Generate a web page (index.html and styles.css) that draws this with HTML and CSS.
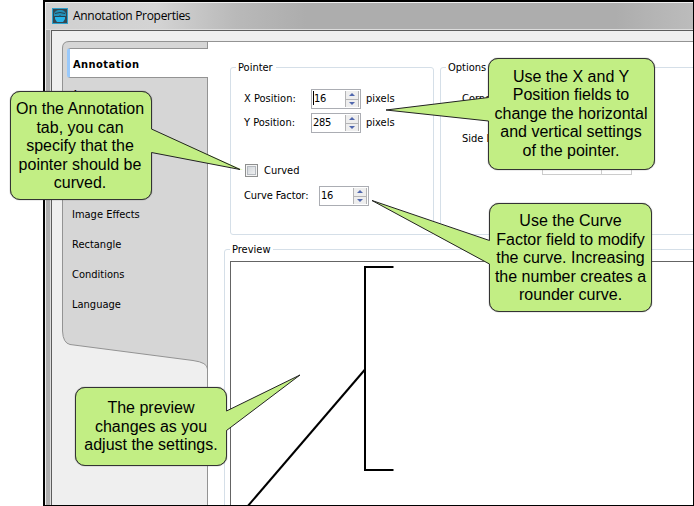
FILE: index.html
```html
<!DOCTYPE html>
<html lang="en">
<head>
<meta charset="utf-8">
<title>Annotation Properties</title>
<link rel="stylesheet" href="styles.css">
</head>
<body>
<div class="window">
  <header class="titlebar">
    <svg class="app-icon" width="16" height="16" viewBox="0 0 16 16">
      <rect width="16" height="16" fill="#2b9fcb"/>
      <rect x="1" y="1" width="14" height="14" fill="#354750"/>
      <path d="M2 7c0-3 2-5 6-5s6 2 6 5v1H2z" fill="#2490b8"/>
      <path d="M3 9h10v2l-2 3H5l-2-3z" fill="#27b4e9"/>
      <path d="M3 5.500q5-2 10 0M3 8.500h4l1-1 1 1h4" fill="none" stroke="#28414d"/>
    </svg>
    <span class="title">Annotation Properties</span>
  </header>
  <div class="client">
    <nav class="sidebar">
      <svg class="side-shape" width="146" height="464" viewBox="0 0 146 464">
        <path d="M146 .5H7Q.5.5.5 7V290Q1 302 8 303.5L131 319.500Q145.500 321.500 145.500 328V0" fill="#d6d6d6" stroke="#939393"/>
        <path d="M145.500 0V464" stroke="#939393"/>
      </svg>
      <div class="tab active">Annotation</div>
      <div class="tab">A</div>
      <div class="tab"></div>
      <div class="tab"></div>
      <div class="tab"></div>
      <div class="tab">Image Effects</div>
      <div class="tab">Rectangle</div>
      <div class="tab">Conditions</div>
      <div class="tab">Language</div>
    </nav>
    <main class="page">
      <div class="groups">
        <fieldset class="pointer">
          <legend>Pointer</legend>
          <div class="row"><label>X Position:</label><div class="spin caret"><span>16</span><i class="btns"><b class="up"></b><b class="down"></b></i></div><em>pixels</em></div>
          <div class="row second"><label>Y Position:</label><div class="spin"><span>285</span><i class="btns"><b class="up"></b><b class="down"></b></i></div><em>pixels</em></div>
          <div class="row check"><span class="box"></span><span>Curved</span></div>
          <div class="row factor"><label>Curve Factor:</label><div class="spin"><span>16</span><i class="btns"><b class="up"></b><b class="down"></b></i></div></div>
        </fieldset>
        <fieldset class="options">
          <legend>Options</legend>
          <div class="opt">Corne</div>
          <div class="opt side">Side L</div>
          <div class="combo"><span></span></div>
        </fieldset>
      </div>
      <fieldset class="preview">
        <legend>Preview</legend>
        <div class="canvas">
          <svg width="463" height="244" viewBox="231 262 463 244" fill="none" stroke="#000" stroke-width="2">
            <path d="M393.500 267H365V470H393.500"/>
            <path d="M365 369.500L247 507"/>
          </svg>
        </div>
      </fieldset>
    </main>
  </div>
</div>

<div class="callout c1"><span>On the Annotation</span><span>tab, you can</span><span>specify that the</span><span>pointer should be</span><span>curved.</span></div>
<div class="callout c2"><span>Use the X and Y</span><span>Position fields to</span><span>change the horizontal</span><span>and vertical settings</span><span>of the pointer.</span></div>
<div class="callout c3"><span>Use the Curve</span><span>Factor field to modify</span><span>the curve. Increasing</span><span>the number creates a</span><span>rounder curve.</span></div>
<div class="callout c4"><span>The preview</span><span>changes as you</span><span>adjust the settings.</span></div>
<svg class="tails" width="694" height="506" viewBox="0 0 694 506">
  <g stroke="none">
    <path d="M150 129H151.500L243 170L151.500 152.500H150Z"/>
    <path d="M490 97.500H488L386 110L488 121H490Z"/>
    <path d="M491 240.500H489L372 200.500L489 264H491Z"/>
    <path d="M225 411H226.500L300 375L226.500 430.500H225Z"/>
  </g>
  <g fill="none">
    <path d="M151.500 129L240 169.500L151.500 152.500"/>
    <path d="M488.500 97.500L386 110L488.500 121"/>
    <path d="M489.500 240.500L372 200.500L489.500 264"/>
    <path d="M226.500 411L300 375L226.500 430.500"/>
  </g>
</svg>
</body>
</html>
```
FILE: styles.css
```css
* { box-sizing: border-box; }
body {
  margin: 0;
  width: 694px;
  height: 506px;
  position: relative;
  overflow: hidden;
  background: #fff;
  color: #000;
  font: 11px/14px "DejaVu Sans Condensed", "DejaVu Sans", sans-serif;
  letter-spacing: -0.25px;
}
.window {
  margin-left: 43px;
  width: 651px;
  height: 506px;
  display: flex;
  flex-direction: column;
  border: solid #000;
  border-width: 2px 1px 1px 2px;
  background: #adadad;
  overflow: hidden;
  box-shadow: inset 1px 1px #eee;
  padding-left: 6px;
}
.titlebar {
  flex: 0 0 28px;
  margin-left: -5px;
  padding: 0 0 0 6px;
  display: flex;
  align-items: center;
  gap: 5px;
  border-top: 1px solid #eee;
  border-bottom: 1px solid #ddd;
  background: linear-gradient(90deg, #d0d0d0, #d4d4d4 110px, #b9b9b9 190px, #adadad 260px, #adadad 570px, #bcbcbc);
  font: 12px/16px "Open Sans", "Noto Sans", sans-serif;
  letter-spacing: -0.3px;
}
.client {
  flex: 1;
  display: flex;
  border: solid #5c5c5c;
  border-width: 1px 0 0 1px;
  padding: 10px 0 0 10px;
  background: #efefef;
  min-height: 0;
  box-shadow: -1px 0 #ddd;
}
.sidebar {
  position: relative;
  flex: 0 0 146px;
  padding: 7px 0 0 5px;
}
.side-shape { position: absolute; left: 0; top: 0; }
.tab {
  position: relative;
  height: 30px;
  padding-left: 5px;
  line-height: 33px;
  letter-spacing: 0;
}
.tab.active {
  padding-left: 3px;
  line-height: 31px;
  background: #fff;
  border: solid #939393;
  border-width: 1px 0;
  border-left: 3px solid #99c9fb;
  border-radius: 3px 0 0 3px;
  font-weight: bold;
  letter-spacing: 0.45px;
}
.page {
  flex: 1;
  min-width: 0;
  border-top: 1px solid #939393;
  background: #fff;
  padding: 18px 0 0 16px;
  overflow: hidden;
}
fieldset {
  margin: 0;
  padding: 0;
  min-width: 0;
  border: 1px solid #d5dfe8;
  border-radius: 3px;
}
legend { padding: 0 3px 0 2px; height: 14px; line-height: 15px; letter-spacing: 0; }
.groups { display: flex; gap: 6px; margin-left: 6px; height: 175px; width: 480px; }
.pointer { flex: 0 0 204px; padding: 15px 0 0 13px; }
.pointer legend { margin-left: -8px; }
.options { flex: 1; padding: 18px 0 0 21px; }
.options legend { margin-left: -16px; }
.row { display: flex; align-items: center; height: 20px; }
.row label { width: 67px; white-space: nowrap; letter-spacing: 0; }
.row em { font-style: normal; margin-left: 5px; letter-spacing: 0; }
.second { margin-top: 4px; }
.check { height: 13px; margin: 31px 0 0 1px; gap: 6px; letter-spacing: 0; line-height: 15px; }
.factor { margin-top: 9px; }
.factor label { width: 75px; letter-spacing: -0.1px; }
.box {
  width: 13px;
  height: 13px;
  border: 1px solid #8e8f8f;
  box-shadow: inset 0 0 0 1px #f4f4f4, inset 0 0 0 2px #b5bac0;
  background: linear-gradient(135deg, #cbd0d5, #f6f6f6);
}
.spin {
  width: 50px;
  height: 20px;
  display: flex;
  justify-content: space-between;
  border: 1px solid #abadb3;
  padding: 1px;
  line-height: 16px;
}
.caret span { border-left: 1px solid #000; height: 14px; }
.btns { display: flex; flex-direction: column; gap: 1px; width: 14px; background: #b4b4b6; padding: 0 1px; }
.btns b { flex: 1; display: flex; align-items: center; justify-content: center; background: #eee; }
.btns b::before { content: ""; border: solid transparent; border-width: 0 3px 3px; border-bottom-color: #5067ad; }
.btns .down::before { border-width: 3px 3px 0; border-top-color: #5067ad; }
.opt { height: 14px; letter-spacing: 0; }
.side { margin-top: 26px; }
.combo { margin: 9px 0 0 80px; width: 90px; height: 20px; border: 1px solid #ccc; }
.combo span { display: block; width: 59px; height: 18px; border-right: 1px solid #ccc; }
.preview { margin-top: 7px; width: 490px; height: 280px; padding: 5px 0 0 5px; }
.preview legend { margin-left: 0; }
.canvas { border: 1px solid #646464; height: 270px; }
.canvas svg { display: block; }

.callout {
  position: absolute;
  display: flex;
  flex-direction: column;
  align-items: center;
  justify-content: center;
  background: #c2ee84;
  border: 1px solid #333;
  border-radius: 10px;
  box-shadow: 0 0 1px #333;
  font: 16px/18.5px "Liberation Sans", Arial, sans-serif;
  letter-spacing: 0;
  white-space: nowrap;
}
.c1 { left: 10px; top: 91px; width: 142px; height: 109px; padding: 2px 2px 0 0; }
.c2 { left: 488px; top: 58px; width: 167px; height: 112px; padding-right: 1px; }
.c3 { left: 489px; top: 203px; width: 163px; height: 109px; padding-top: 2px; }
.c4 { left: 75px; top: 387px; width: 152px; height: 79px; padding-top: 1px; }
.tails { position: absolute; left: 0; top: 0; pointer-events: none; fill: #c2ee84; stroke: #222; stroke-width: 1; }
```
